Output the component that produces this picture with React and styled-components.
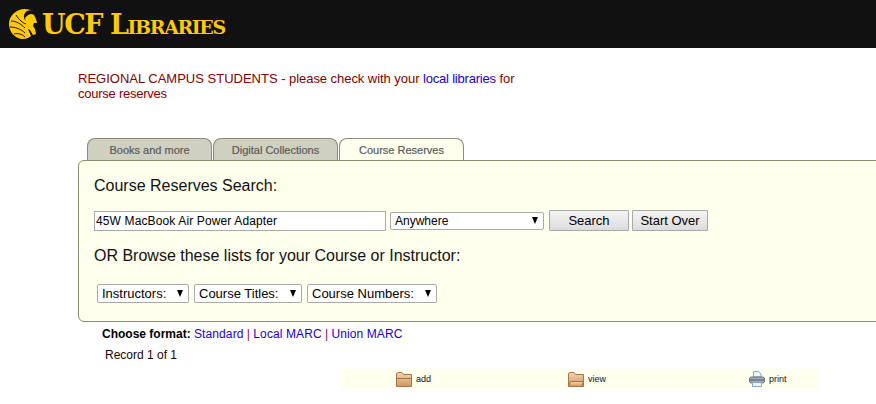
import React from "react";
import styled, { createGlobalStyle } from "styled-components";

const GlobalStyle = createGlobalStyle`
  html, body {
    margin: 0;
    padding: 0;
    background: #fff;
    overflow: hidden;
  }
  body {
    font-family: "Liberation Sans", Arial, sans-serif;
    font-size: 12px;
    color: #000;
  }
`;

const Page = styled.div`
  width: 876px;
  height: 404px;
  overflow: hidden;
`;

const Header = styled.header`
  height: 48px;
  background: #111;
  display: flex;
  align-items: center;
  padding-left: 8px;
`;

const Brand = styled.span`
  font-family: "DejaVu Serif", serif;
  font-weight: bold;
  font-size: 27px;
  font-variant: small-caps;
  letter-spacing: -1.4px;
  color: #ffc904;
`;

const Main = styled.main`
  padding: 23px 0 0 78px;
`;

const Notice = styled.p`
  margin: 0;
  font-size: 13px;
  line-height: 15px;
  letter-spacing: -0.05px;
  color: #800000;
`;

const Caps = styled.span`
  letter-spacing: 0;
`;

const NoticeEnd = styled.span`
  letter-spacing: -0.25px;
`;

const Link = styled.a`
  color: #2200cc;
  text-decoration: none;
  letter-spacing: 0.1px;
`;

const NoticeLink = styled(Link)`
  letter-spacing: -0.2px;
`;

const Tabs = styled.nav`
  display: flex;
  gap: 1px;
  margin: 37px 0 0 9px;
`;

const Tab = styled.div`
  width: 125px;
  height: 22px;
  box-sizing: border-box;
  display: flex;
  align-items: center;
  justify-content: center;
  font-size: 11px;
  color: #5a5a5a;
  -webkit-text-stroke: 0.2px #5a5a5a;
  border: 1px solid #8c8c6e;
  border-bottom: 0;
  border-radius: 8px 8px 0 0;
  background: ${(p) => (p.$active ? "#ffffee" : "#d0d0c0")};
`;

const Panel = styled.section`
  width: 840px;
  height: 162px;
  box-sizing: border-box;
  border: 1px solid #8c8c6e;
  border-radius: 6px;
  background: #ffffee;
  padding: 16px 0 0 15px;
`;

const Heading = styled.h2`
  margin: 0;
  font-size: 16px;
  font-weight: normal;
  line-height: 18px;
  color: #111;
`;

const SearchRow = styled.div`
  display: flex;
  align-items: center;
  margin-top: 15px;
  height: 21px;
`;

const TextInput = styled.div`
  width: 292px;
  height: 20px;
  box-sizing: border-box;
  border: 1px solid #a9a9a9;
  background: #fff;
  font-size: 12px;
  letter-spacing: 0.13px;
  line-height: 18px;
  padding-left: 1px;
`;

const SelectBox = styled.div`
  box-sizing: border-box;
  height: 18px;
  width: ${(p) => p.$width}px;
  margin-left: ${(p) => p.$gap || 0}px;
  border: 1px solid #a9a9a9;
  border-radius: 2px;
  background: #fff;
  display: flex;
  align-items: center;
  justify-content: space-between;
  font-size: 12px;
  padding: 0 5px 0 4px;
`;

const BrowseSelect = styled(SelectBox)`
  height: 19px;
  font-size: 13px;
`;

const Arrow = styled.span`
  width: 0;
  height: 0;
  border-left: 3.5px solid transparent;
  border-right: 3.5px solid transparent;
  border-top: 7px solid #000;
`;

const Button = styled.button`
  box-sizing: border-box;
  height: 21px;
  width: ${(p) => p.$width}px;
  margin-left: ${(p) => p.$gap}px;
  padding: 0;
  font-family: inherit;
  font-size: 13px;
  color: #000;
  border: 1px solid #a9a9a9;
  border-radius: 1px;
  background: linear-gradient(#f4f4f4, #dcdcdc);
`;

const SubHeading = styled(Heading)`
  margin-top: 16px;
`;

const BrowseRow = styled.div`
  display: flex;
  margin: 19px 0 0 3px;
`;

const Format = styled.div`
  margin: 5px 0 0 24px;
  line-height: 15px;
  color: #800080;
`;

const Label = styled.b`
  color: #000;
`;

const Record = styled.div`
  margin: 6px 0 0 27px;
  line-height: 15px;
  color: #220000;
`;

const ActionBar = styled.div`
  margin: 6px 0 0 263px;
  width: 479px;
  height: 20px;
  background: #ffffee;
  display: grid;
  grid-template-columns: 172px 181px 1fr;
  padding-left: 55px;
  box-sizing: border-box;
`;

const Action = styled.div`
  display: flex;
  align-items: center;
  gap: 4px;
  font-size: 9px;
  color: #111;
`;

const Pegasus = () => (
  <svg width="34" height="32" viewBox="0 0 34 32">
    <path
      d="M17 1C8 1 1 8 1 16c0 8 6 15 14 15 3 0 6-1 8-3l-3-7 1-5-4-4c-2-3-1-7 2-9 2-1 4-1 6 0-2-1-5-2-8-2z"
      fill="#ffc904"
    />
    <path
      d="M17 10c3-4 7-5 9-3l2 4 1 4-3 0-1 3 2 3 1 5-3 1-3-5-2-1-2-5z"
      fill="#ffc904"
    />
    <path
      d="M8 7c3 5 7 8 10 9M3 13c5 0 10 3 14 7M2 19c5 0 11 2 15 6M6 26c4-1 8 0 11 3"
      stroke="#111"
      strokeWidth="1"
      fill="none"
    />
  </svg>
);

const Folder = ({ open }) => (
  <svg width="16" height="15" viewBox="0 0 16 15">
    <defs>
      <linearGradient id="folderFill" x1="0" y1="0" x2="0" y2="1">
        <stop offset="0" stopColor="#f3d3b0" />
        <stop offset="1" stopColor="#cf9660" />
      </linearGradient>
    </defs>
    <path d="M.5 14.500V1.500L2 .5h4l1.500 2h8v12z" fill="url(#folderFill)" stroke="#a87443" />
    {open ? (
      <path d="M.5 14.500l2-5h13l-2 5z" fill="url(#folderFill)" stroke="#a87443" />
    ) : (
      <path d="M1 6.500h14" stroke="#a87443" />
    )}
  </svg>
);

const Printer = () => (
  <svg width="16" height="16" viewBox="0 0 16 16">
    <path d="M4.500.5h5l2.500 2.500V6H4.500z" fill="#eef4fb" stroke="#7ea6d8" />
    <rect x=".5" y="6" width="15" height="6" rx="2" fill="#a3aab0" stroke="#6d747a" />
    <path d="M1 9h14" stroke="#555c62" />
    <path d="M3.500 11.500h9v4h-9z" fill="#eef4fb" stroke="#7ea6d8" />
  </svg>
);

export default function App() {
  return (
    <Page>
      <GlobalStyle />
      <Header>
        <Pegasus />
        <Brand>UCF Libraries</Brand>
      </Header>
      <Main>
        <Notice>
          <Caps>REGIONAL CAMPUS STUDENTS</Caps> - please check with your <NoticeLink>local libraries</NoticeLink> for
          <br />
          <NoticeEnd>course reserves</NoticeEnd>
        </Notice>
        <Tabs>
          <Tab>Books and more</Tab>
          <Tab>Digital Collections</Tab>
          <Tab $active>Course Reserves</Tab>
        </Tabs>
        <Panel>
          <Heading>Course Reserves Search:</Heading>
          <SearchRow>
            <TextInput>45W MacBook Air Power Adapter</TextInput>
            <SelectBox $width={154} $gap={4}>Anywhere<Arrow /></SelectBox>
            <Button $width={80} $gap={5}>Search</Button>
            <Button $width={76} $gap={3}>Start Over</Button>
          </SearchRow>
          <SubHeading>OR Browse these lists for your Course or Instructor:</SubHeading>
          <BrowseRow>
            <BrowseSelect $width={92}>Instructors:<Arrow /></BrowseSelect>
            <BrowseSelect $width={108} $gap={5}>Course Titles:<Arrow /></BrowseSelect>
            <BrowseSelect $width={130} $gap={5}>Course Numbers:<Arrow /></BrowseSelect>
          </BrowseRow>
        </Panel>
        <Format>
          <Label>Choose format:</Label> <Link>Standard</Link> | <Link>Local MARC</Link> | <Link>Union MARC</Link>
        </Format>
        <Record>Record 1 of 1</Record>
        <ActionBar>
          <Action><Folder />add</Action>
          <Action><Folder open />view</Action>
          <Action><Printer />print</Action>
        </ActionBar>
      </Main>
    </Page>
  );
}
